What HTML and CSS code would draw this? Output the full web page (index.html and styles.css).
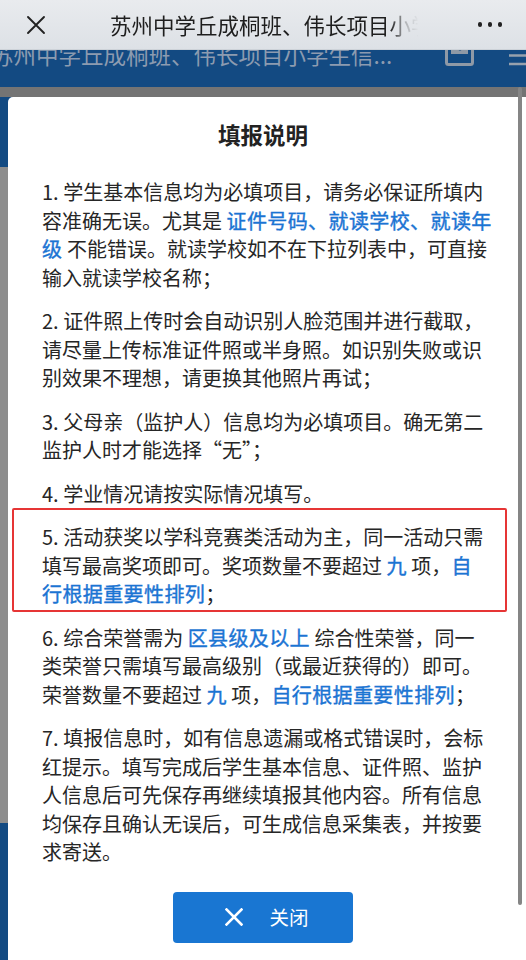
FILE: index.html
```html
<!DOCTYPE html>
<html lang="zh-CN">
<head>
<meta charset="utf-8">
<title>填报说明</title>
<link rel="stylesheet" href="styles.css">
</head>
<body>
<div class="screen">
  <header class="chrome">
    <div class="chrome-close">
      <svg width="22" height="22" viewBox="0 0 22 22"><path d="M3 3 L19 19 M19 3 L3 19" stroke="#222" stroke-width="1.9" stroke-linecap="round" fill="none"/></svg>
    </div>
    <div class="chrome-title">苏州中学丘成桐班、伟长项目小学生信息采集</div>
    <div class="chrome-more"><span class="dot"></span><span class="dot"></span><span class="dot"></span></div>
  </header>

  <div class="pagebar">
    <div class="pagebar-row">
      <span class="pagebar-title">苏州中学丘成桐班、伟长项目小学生信...</span>
      <svg class="pagebar-icon" width="30" height="30" viewBox="0 0 30 30"><rect x="1.5" y="1.5" width="26" height="26" rx="2" fill="none" stroke="#8f99a6" stroke-width="3"/><rect x="6" y="4" width="17" height="13" fill="#8f99a6"/><circle cx="15" cy="12" r="1.6" fill="#134a82"/></svg>
      <svg class="pagebar-menu" width="22" height="30" viewBox="0 0 22 30"><path d="M0 5 H22 M0 13.5 H22 M0 22 H22" stroke="#97a1ad" stroke-width="2.6"/></svg>
    </div>
  </div>

  <main class="stage">
    <section class="modal">
      <h1 class="modal-title">填报说明</h1>
      <div class="notes">
        <p class="note">1. 学生基本信息均为必填项目，请务必保证所填内<br>容准确无误。尤其是 <span class="em">证件号码、就读学校、就读年<br>级</span> 不能错误。就读学校如不在下拉列表中，可直接<br>输入就读学校名称；</p>
        <p class="note">2. 证件照上传时会自动识别人脸范围并进行截取，<br>请尽量上传标准证件照或半身照。如识别失败或识<br>别效果不理想，请更换其他照片再试；</p>
        <p class="note">3. 父母亲（监护人）信息均为必填项目。确无第二<br>监护人时才能选择“无”；</p>
        <p class="note">4. 学业情况请按实际情况填写。</p>
        <p class="note note-marked">5. 活动获奖以学科竞赛类活动为主，同一活动只需<br>填写最高奖项即可。奖项数量不要超过 <span class="em">九</span> 项，<span class="em">自<br>行根据重要性排列</span>；</p>
        <p class="note">6. 综合荣誉需为 <span class="em">区县级及以上</span> 综合性荣誉，同一<br>类荣誉只需填写最高级别（或最近获得的）即可。<br>荣誉数量不要超过 <span class="em">九</span> 项，<span class="em">自行根据重要性排列</span>；</p>
        <p class="note">7. 填报信息时，如有信息遗漏或格式错误时，会标<br>红提示。填写完成后学生基本信息、证件照、监护<br>人信息后可先保存再继续填报其他内容。所有信息<br>均保存且确认无误后，可生成信息采集表，并按要<br>求寄送。</p>
      </div>
      <div class="actions">
        <button class="close-btn" type="button">
          <svg width="18" height="18" viewBox="0 0 18 18"><path d="M1.5 1.5 L16.5 16.5 M16.5 1.5 L1.5 16.5" stroke="#fff" stroke-width="2.6" stroke-linecap="square" fill="none"/></svg>
          <span>关闭</span>
        </button>
      </div>
    </section>
    <div class="scroll-thumb"></div>
  </main>
</div>
</body>
</html>
```

FILE: styles.css
```css
* { box-sizing: border-box; }

html, body {
  margin: 0;
  padding: 0;
}

body {
  width: 526px;
  height: 960px;
  overflow: hidden;
  font-family: "Noto Sans CJK SC", "Noto Sans", sans-serif;
  color: #262626;
  background: #8b8b8b;
}

.screen {
  display: flex;
  flex-direction: column;
  height: 960px;
}

/* top browser chrome */
.chrome {
  flex: 0 0 50px;
  display: flex;
  align-items: center;
  background: linear-gradient(#e9ebee, #dde1e6);
  border-bottom: 1px solid #cdd2d8;
  position: relative;
  z-index: 2;
}

.chrome-close {
  flex: 0 0 72px;
  display: flex;
  justify-content: center;
  align-items: center;
  height: 100%;
}

.chrome-title {
  flex: 0 0 318px;
  margin-left: 38px;
  font-size: 21.5px;
  line-height: 30px;
  color: #1e1e1e;
  white-space: nowrap;
  overflow: hidden;
  -webkit-mask-image: linear-gradient(to right, #000 0, #000 88%, rgba(0,0,0,0.25) 93%, transparent 97%);
  mask-image: linear-gradient(to right, #000 0, #000 88%, rgba(0,0,0,0.25) 93%, transparent 97%);
}

.chrome-more {
  margin-left: auto;
  margin-right: 24px;
  display: flex;
  gap: 5.5px;
  align-items: center;
}

.dot {
  width: 4.5px;
  height: 4.5px;
  border-radius: 50%;
  background: #222;
}

/* dimmed page header behind overlay */
.pagebar {
  flex: 0 0 37px;
  background: #134a82;
  overflow: hidden;
}

.pagebar-row {
  display: flex;
  align-items: flex-start;
  margin-top: -11px;
  margin-left: -9px;
}

.pagebar-title {
  font-size: 22.5px;
  line-height: 30px;
  color: #8c9bb0;
  white-space: nowrap;
}

.pagebar-icon {
  margin-left: 53px;
  margin-top: -2px;
  flex: 0 0 auto;
}

.pagebar-menu {
  margin-left: 34px;
  margin-top: 3px;
  flex: 0 0 auto;
}

/* stage with overlay */
.stage {
  flex: 1 1 auto;
  position: relative;
  display: flex;
  flex-direction: column;
  padding: 10px 0 0 8px;
  background:
    linear-gradient(to bottom,
      #747474 0, #747474 10px,
      #134a82 10px, #134a82 80px,
      #8d8d8d 80px, #8d8d8d 736px,
      #134a82 736px, #134a82 100%);
}

.modal {
  flex: 1 1 auto;
  background: #fff;
  border-radius: 5px 0 0 0;
  padding: 21px 42px 0 34px;
}

.modal-title {
  margin: 0 0 28px;
  text-align: center;
  font-size: 22.5px;
  line-height: 32px;
  font-weight: 700;
  color: #222;
}

.notes {
  display: flex;
  flex-direction: column;
  gap: 15px;
}

.note {
  margin: 0;
  font-size: 20px;
  line-height: 28.5px;
  white-space: nowrap;
  color: #262626;
}

.em {
  color: #1b74d3;
  font-weight: 400;
  letter-spacing: 0.4px;
  -webkit-text-stroke: 0.4px #1b74d3;
}

.note-marked {
  position: relative;
}

.note-marked::before {
  content: "";
  position: absolute;
  top: -15px;
  bottom: -3px;
  left: -30px;
  right: -23px;
  border: 2.7px solid #e63535;
  border-radius: 2px;
  pointer-events: none;
}

.actions {
  display: flex;
  justify-content: center;
  margin-top: 25px;
}

.close-btn {
  width: 180px;
  height: 51px;
  border: 0;
  border-radius: 4px;
  background: #1976d2;
  color: #fff;
  display: flex;
  align-items: center;
  justify-content: center;
  gap: 26px;
  padding: 0 0 0 8px;
  font-family: "Noto Sans CJK SC", sans-serif;
  font-size: 19.5px;
  line-height: 1;
}

.scroll-thumb {
  position: absolute;
  top: 0;
  left: 518px;
  width: 3.5px;
  height: 818px;
  border-radius: 2px;
  background: #858585;
}
```
